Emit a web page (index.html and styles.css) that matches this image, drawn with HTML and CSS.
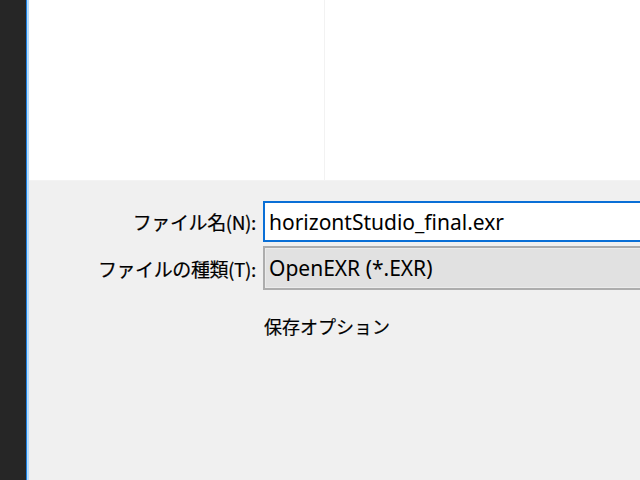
FILE: index.html
```html
<!DOCTYPE html>
<html lang="ja">
<head>
    <meta charset="UTF-8">
    <meta name="viewport" content="width=device-width, initial-scale=1.0">
    <title>名前を付けて保存</title>
    <link rel="stylesheet" href="styles.css">
</head>
<body>
    <div class="app">
        <div class="side-strip"></div>

        <div class="dialog">
            <div class="browser">
                <div class="nav-pane"></div>
                <div class="file-pane"></div>
            </div>

            <div class="save-form">
                <label class="field-label" for="filename">ファイル名(N):</label>
                <input class="field-input" id="filename" type="text" value="horizontStudio_final.exr">

                <span class="field-label">ファイルの種類(T):</span>
                <div class="field-select">OpenEXR (*.EXR)</div>

                <span></span>
                <div class="save-options">保存オプション</div>
            </div>
        </div>
    </div>
</body>
</html>
```

FILE: styles.css
```css
* {
    margin: 0;
    padding: 0;
    box-sizing: border-box;
}

html, body {
    width: 100%;
    height: 100%;
    overflow: hidden;
}

body {
    font-family: "Noto Sans", "Noto Sans CJK JP", sans-serif;
    color: #000;
    background-color: #262626;
}

.app {
    display: flex;
    height: 100%;
}

.side-strip {
    width: 27px;
    flex-shrink: 0;
    background-color: #262626;
    border-right: 1px solid #1a7fe0;
}

.dialog {
    flex: 1;
    display: flex;
    flex-direction: column;
    background-color: #f0f0f0;
    border-left: 2px solid #b5ddff;
    min-width: 0;
}

.browser {
    height: 181px;
    display: flex;
    background-color: #fff;
    border-bottom: 1px solid #f3f3f3;
}

.nav-pane {
    width: 296px;
    border-right: 1px solid #f2f2f2;
}

.file-pane {
    flex: 1;
}

.save-form {
    display: grid;
    grid-template-columns: 227px 1fr;
    column-gap: 7px;
    row-gap: 4px;
    padding-top: 20px;
    margin-right: -20px;
}

.field-label {
    font-family: "Noto Sans CJK JP", sans-serif;
    font-size: 19px;
    text-align: right;
    align-self: center;
    white-space: nowrap;
    letter-spacing: -0.4px;
    -webkit-text-stroke: 0.2px #000;
}

.field-input {
    height: 41px;
    border: 2px solid #0a6fd6;
    background-color: #fff;
    padding: 0 4px;
    font-family: "Noto Sans", sans-serif;
    font-size: 21px;
    color: #000;
    outline: none;
}

.field-select {
    height: 44px;
    border: 2px solid #adadad;
    box-shadow: inset 0 0 0 1px #ebebeb;
    background-color: #e1e1e1;
    padding: 0 4px;
    display: flex;
    align-items: center;
    font-size: 21px;
    white-space: nowrap;
}

.save-options {
    font-family: "Noto Sans CJK JP", sans-serif;
    font-size: 18px;
    margin-top: 19px;
    padding-left: 1px;
    -webkit-text-stroke: 0.2px #000;
}
```
